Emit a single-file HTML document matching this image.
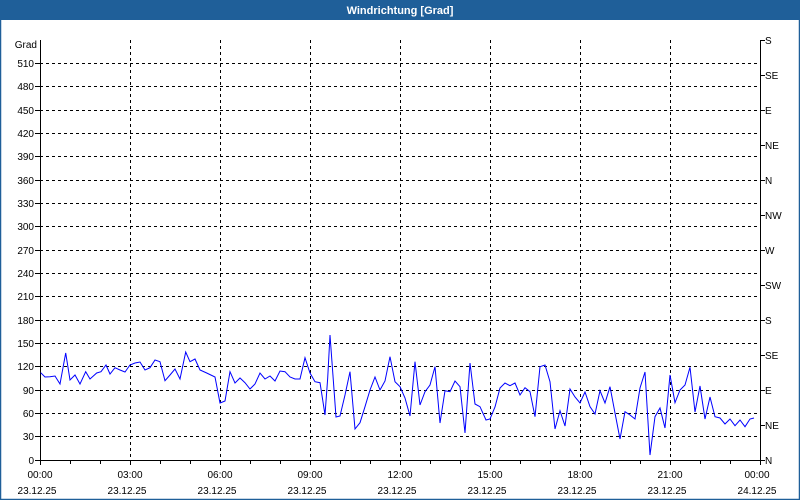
<!DOCTYPE html>
<html><head><meta charset="utf-8"><style>
html,body{margin:0;padding:0;width:800px;height:500px;overflow:hidden;background:#fff}
svg{display:block}
text{font-family:"Liberation Sans",sans-serif;font-size:10px;fill:#000}
</style></head><body>
<svg width="800" height="500" viewBox="0 0 800 500">
<rect x="0" y="0" width="800" height="500" fill="#fff"/>
<rect x="0.5" y="0.5" width="799" height="499" fill="none" stroke="#1f5f99" stroke-width="1.5"/>
<rect x="0" y="0" width="800" height="20" fill="#1f5f99"/>
<text x="400" y="14" text-anchor="middle" style="fill:#fff;font-weight:bold;font-size:11px">Windrichtung [Grad]</text>
<g stroke="#000" stroke-width="1" stroke-dasharray="3,3" fill="none">
<path d="M40 63.5H760M40 86.5H760M40 110.5H760M40 133.5H760M40 156.5H760M40 180.5H760M40 203.5H760M40 226.5H760M40 250.5H760M40 273.5H760M40 296.5H760M40 320.5H760M40 343.5H760M40 366.5H760M40 390.5H760M40 413.5H760M40 436.5H760"/>
<path d="M130.5 40V460M220.5 40V460M310.5 40V460M400.5 40V460M490.5 40V460M580.5 40V460M670.5 40V460"/>
</g>
<g stroke="#000" stroke-width="1" fill="none">
<path d="M40.5 40V460.5H760.5V40"/>
<path d="M35 63.5H40M35 86.5H40M35 110.5H40M35 133.5H40M35 156.5H40M35 180.5H40M35 203.5H40M35 226.5H40M35 250.5H40M35 273.5H40M35 296.5H40M35 320.5H40M35 343.5H40M35 366.5H40M35 390.5H40M35 413.5H40M35 436.5H40M35 460.5H40"/>
<path d="M760 40.5H765M760 75.5H765M760 110.5H765M760 145.5H765M760 180.5H765M760 215.5H765M760 250.5H765M760 285.5H765M760 320.5H765M760 355.5H765M760 390.5H765M760 425.5H765M760 460.5H765"/>
<path d="M40.5 460V465M70.5 460V464M100.5 460V464M130.5 460V465M160.5 460V464M190.5 460V464M220.5 460V465M250.5 460V464M280.5 460V464M310.5 460V465M340.5 460V464M370.5 460V464M400.5 460V465M430.5 460V464M460.5 460V464M490.5 460V465M520.5 460V464M550.5 460V464M580.5 460V465M610.5 460V464M640.5 460V464M670.5 460V465M700.5 460V464M730.5 460V464M760.5 460V465"/>
</g>
<g text-anchor="end">
<text x="37" y="48">Grad</text>
<text x="34" y="67">510</text><text x="34" y="90">480</text><text x="34" y="114">450</text><text x="34" y="137">420</text><text x="34" y="160">390</text><text x="34" y="184">360</text><text x="34" y="207">330</text><text x="34" y="230">300</text><text x="34" y="254">270</text><text x="34" y="277">240</text><text x="34" y="300">210</text><text x="34" y="324">180</text><text x="34" y="347">150</text><text x="34" y="370">120</text><text x="34" y="394">90</text><text x="34" y="417">60</text><text x="34" y="440">30</text><text x="34" y="464">0</text>
</g>
<g>
<text x="765" y="44">S</text><text x="765" y="79">SE</text><text x="765" y="114">E</text><text x="765" y="149">NE</text><text x="765" y="184">N</text><text x="765" y="219">NW</text><text x="765" y="254">W</text><text x="765" y="289">SW</text><text x="765" y="324">S</text><text x="765" y="359">SE</text><text x="765" y="394">E</text><text x="765" y="429">NE</text><text x="765" y="464">N</text>
</g>
<g text-anchor="middle">
<text x="40" y="478">00:00</text><text x="130" y="478">03:00</text><text x="220" y="478">06:00</text><text x="310" y="478">09:00</text><text x="400" y="478">12:00</text><text x="490" y="478">15:00</text><text x="580" y="478">18:00</text><text x="670" y="478">21:00</text><text x="757" y="478">00:00</text>
<text x="37" y="494">23.12.25</text><text x="127" y="494">23.12.25</text><text x="217" y="494">23.12.25</text><text x="307" y="494">23.12.25</text><text x="397" y="494">23.12.25</text><text x="487" y="494">23.12.25</text><text x="577" y="494">23.12.25</text><text x="667" y="494">23.12.25</text><text x="757" y="494">24.12.25</text>
</g>
<polyline fill="none" stroke="#0000ff" stroke-width="1" points="40.7,372.7 45,377 50,376.7 55,376 60,384 65.7,353 70,380 75,375 80,384 85.7,371.7 90,379 96.7,373 101,371.7 106,365 110,374 115,367.7 120,370 125,372 130,365 135,363 140,362 145,370 150,367.7 155,360 160,361.7 165,380.7 170,375 175,369 180,379 185.7,352 190,361.7 195,359 200,370 206.7,373 215,377 220,403 225,401 230,371.7 235,383 240,378 245,382.7 250,389 255,384 260,373 265,379 270,376 275,381 280,371 285,371.7 290,377 295,379 300,379 305,357.7 310,373 315,381.7 320,382.7 322.7,400 325,415 327.7,378 330,335 333.3,380 336,417 340,416 345,395 350,371.7 355,429 360,422.7 365,406.7 370,390 375,377 380,390 385,381 390,356.7 395,381.7 400,386.7 405,398 410,416 415,361.7 420,405 425,391.7 430,385 435,366.7 440,423 445,390.7 450,391.7 455,381 460,386.7 465,433 470,363 475,404 480,406.7 486,420 490,419 495,407 500,388 505,383 510,385.7 515,383 520,395 525,387.7 530,391.7 535,416.7 540,366.7 545,365 550,381.7 555,429 560,410.7 565,426 570,389 575,397 580,403 585,392 590,406.7 595,414 600,390.7 605,403 610,386.7 615,413 620,439 625,411.7 630,415 635,419 640,388 645,372 650,455 655,416.7 660,408 665,428 670,375 675,402.7 680,390 685,385 690,367.3 695,412 700,386 705,419 710,397 715,416.7 720,418 725,424 730,419 735,425.7 740,420 745,426.7 750,419 754,418"/>
</svg>
</body></html>
